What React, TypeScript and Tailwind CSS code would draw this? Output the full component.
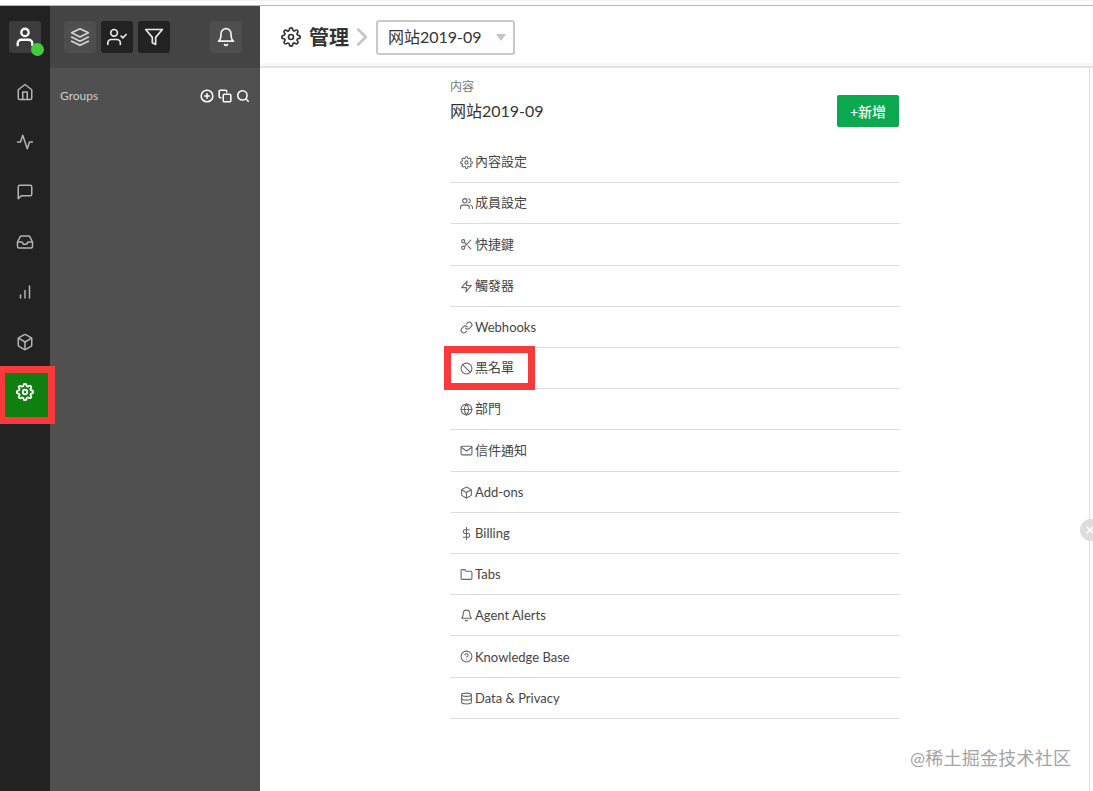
import React from 'react';
import {
  FiActivity, FiBarChart, FiBell, FiBox, FiChevronRight, FiCopy, FiDatabase, FiDollarSign, FiFilter, FiFolder,
  FiGlobe, FiHelpCircle, FiHome, FiInbox, FiLayers, FiLink, FiMail, FiMessageSquare, FiPlusCircle, FiScissors,
  FiSearch, FiSettings, FiSlash, FiUser, FiUserCheck, FiUsers, FiX, FiZap,
} from 'react-icons/fi';

const railItems = [FiHome, FiActivity, FiMessageSquare, FiInbox, FiBarChart, FiBox];

const menuItems = [
  { icon: FiSettings, label: '內容設定', h: 'h-[41px]' },
  { icon: FiUsers, label: '成員設定', h: 'h-[41px]' },
  { icon: FiScissors, label: '快捷鍵', h: 'h-[42px]' },
  { icon: FiZap, label: '觸發器', h: 'h-[41px]' },
  { icon: FiLink, label: 'Webhooks', h: 'h-[41px]', latin: true },
  { icon: FiSlash, label: '黑名單', h: 'h-[41px]' },
  { icon: FiGlobe, label: '部門', h: 'h-[41px]' },
  { icon: FiMail, label: '信件通知', h: 'h-[42px]' },
  { icon: FiBox, label: 'Add-ons', h: 'h-[41px]', latin: true },
  { icon: FiDollarSign, label: 'Billing', h: 'h-[41px]', latin: true },
  { icon: FiFolder, label: 'Tabs', h: 'h-[41px]', latin: true },
  { icon: FiBell, label: 'Agent Alerts', h: 'h-[41px]', latin: true },
  { icon: FiHelpCircle, label: 'Knowledge Base', h: 'h-[42px]', latin: true },
  { icon: FiDatabase, label: 'Data & Privacy', h: 'h-[41px]', latin: true },
];

export default function App() {
  return (
    <div className="relative h-[791px] w-[1093px] overflow-hidden bg-white font-['Lato','Noto_Sans_CJK_TC',sans-serif] text-[#333]">
      <div className="h-[6px] border-b border-[#b8b8b8] bg-white">
        <div className="ml-[120px] h-px bg-[#f2f2f2]" />
      </div>

      <div className="flex h-[785px]">
        {/* icon rail */}
        <div className="flex w-[50px] shrink-0 flex-col items-center bg-[#222222] pt-[15px]">
          <div className="relative flex h-8 w-8 items-center justify-center rounded-[3px] bg-[#3c3c3c] text-white">
            <FiUser className="h-[22px] w-[22px]" strokeWidth={2.5} />
            <span className="absolute -bottom-[3px] -right-[3px] h-[13px] w-[13px] rounded-full bg-[#45c93f]" />
          </div>
          <div className="mt-[14px] flex w-full flex-col items-center">
            {railItems.map((Icon, i) => (
              <div key={i} className="flex h-[50px] w-full items-center justify-center text-[#b4b4b4]">
                <Icon className="h-[18px] w-[18px]" />
              </div>
            ))}
            <div className="flex h-[50px] w-full items-center justify-center bg-[#0f7f0f] text-white">
              <FiSettings className="h-[18px] w-[18px]" strokeWidth={2.4} />
            </div>
          </div>
        </div>

        {/* groups panel */}
        <div className="flex w-[210px] shrink-0 flex-col bg-[#505050]">
          <div className="flex h-[62px] items-start bg-[#444444] pl-[14px] pt-[15px]">
            <div className="flex h-8 w-8 items-center justify-center rounded-[3px] bg-[#4e4e4e] text-[#d5d5d5]">
              <FiLayers className="h-[20px] w-[20px]" />
            </div>
            <div className="ml-[5px] flex h-8 w-8 items-center justify-center rounded-[3px] bg-[#222222] text-[#e8e8e8]">
              <FiUserCheck className="h-[20px] w-[20px]" />
            </div>
            <div className="ml-[5px] flex h-8 w-8 items-center justify-center rounded-[3px] bg-[#222222] text-[#e8e8e8]">
              <FiFilter className="h-[20px] w-[20px]" />
            </div>
            <div className="ml-[40px] flex h-8 w-8 items-center justify-center rounded-[3px] bg-[#4e4e4e] text-[#f0f0f0]">
              <FiBell className="h-[20px] w-[20px]" />
            </div>
          </div>
          <div className="flex items-center justify-between pl-[10px] pr-[10px] pt-[19px]">
            <span className="text-[12px] leading-[18px] text-[#cccccc]">Groups</span>
            <div className="flex items-center gap-[4px] text-white">
              <FiPlusCircle className="h-[14px] w-[14px]" strokeWidth={2.6} />
              <FiCopy className="h-[14px] w-[14px]" strokeWidth={2.6} />
              <FiSearch className="h-[14px] w-[14px]" strokeWidth={2.6} />
            </div>
          </div>
        </div>

        {/* main */}
        <div className="flex min-w-0 flex-1 flex-col">
          <div className="flex h-[62px] shrink-0 items-center border-b-2 border-[#e2e2e2] pl-[21px] pt-[2px] shadow-[inset_0_-3px_0_#f7f7f7]">
            <FiSettings className="h-[20px] w-[20px] text-[#333]" />
            <span className="ml-[8px] text-[20px] font-bold leading-none text-[#333]">管理</span>
            <FiChevronRight className="-ml-[2px] h-[30px] w-[30px] text-[#c4c4c4]" />
            <div className="-ml-px flex h-[35px] w-[139px] items-center rounded-[3px] border-2 border-[#c8c8c8] pl-[10px]">
              <span className="text-[16px] leading-none text-[#333]">网站2019-09</span>
              <span className="ml-[14px] h-0 w-0 border-x-[5.5px] border-t-[7px] border-x-transparent border-t-[#c4c4c4]" />
            </div>
          </div>

          <div className="mr-[3px] flex flex-1 border-r border-[#dddddd] pl-px">
            <div className="mx-auto w-[450px]">
              <div className="flex items-start justify-between pt-[11px]">
                <div>
                  <div className="text-[12px] leading-[16px] text-[#777]">内容</div>
                  <div className="mt-[5px] text-[16px] leading-[22px] text-[#333]">网站2019-09</div>
                </div>
                <button className="mr-px mt-[16px] flex h-8 w-[62px] items-center justify-center rounded-[2px] bg-[#0aa84f] text-[14px] font-medium text-white">
                  +新增
                </button>
              </div>
              <div className="mt-[15px]">
                {menuItems.map(({ icon: Icon, label, h, latin }) => (
                  <div key={label} className={`flex ${h} items-center border-b border-[#dcdcdc] pl-[10px] text-[13px] text-[#444]`}>
                    <Icon className="h-[13px] w-[13px] text-[#666]" />
                    <span className={latin ? 'ml-[2px] pt-[2px]' : 'ml-[2px]'}>{label}</span>
                  </div>
                ))}
              </div>
            </div>
          </div>
        </div>
      </div>

      {/* annotations */}
      <div className="absolute left-0 top-[366px] h-[58px] w-[55px] border-y-[7px] border-l-[5px] border-r-[7px] border-[#f93a3a]" />
      <div className="absolute left-[444px] top-[346px] h-[44px] w-[91px] border-[7px] border-[#f93a3a]" />

      {/* collapse handle */}
      <div className="absolute left-[1080px] top-[519px] flex h-[22px] w-[22px] items-center justify-center rounded-full bg-[#dddddd] text-white">
        <FiX className="h-[12px] w-[12px] -translate-x-[1px]" strokeWidth={3} />
      </div>

      <div className="absolute left-[910px] top-[746px] text-[18px] leading-[24px] tracking-[0.25px] text-[#a3a3a3]">@稀土掘金技术社区</div>
    </div>
  );
}
